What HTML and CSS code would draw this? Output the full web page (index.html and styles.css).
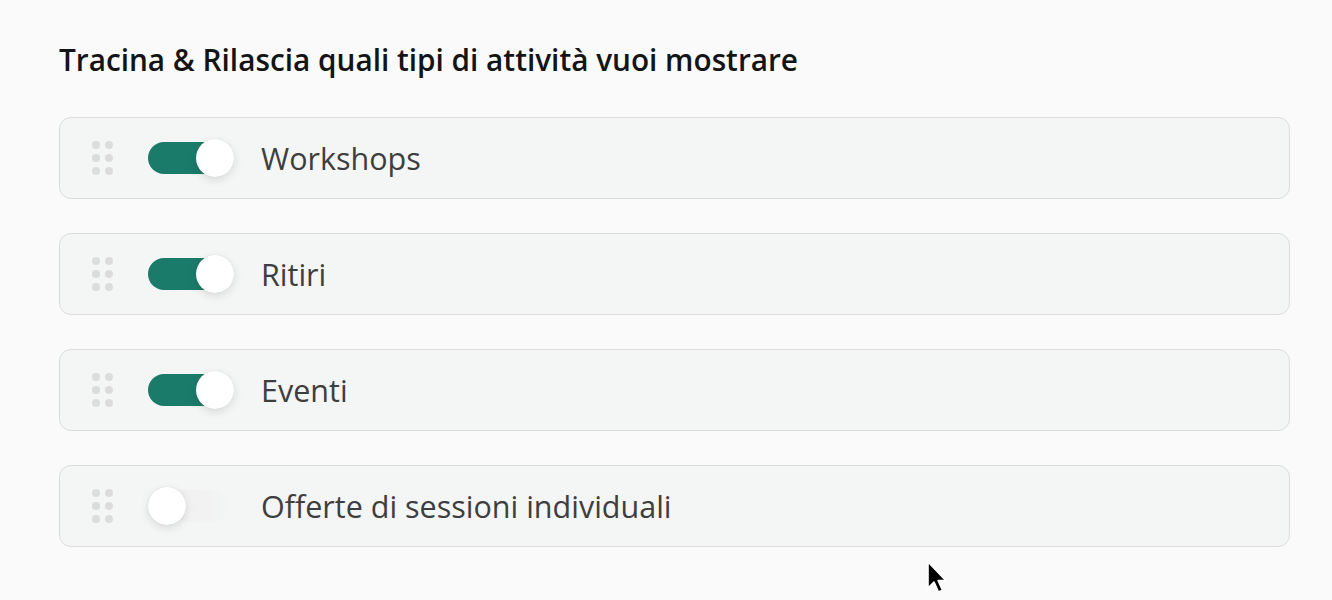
FILE: index.html
```html
<!DOCTYPE html>
<html lang="it">
<head>
<meta charset="utf-8">
<title>Tipi di attività</title>
<link rel="stylesheet" href="styles.css">
</head>
<body>
<main class="page">
  <h2 class="title">Tracina &amp; Rilascia quali tipi di attività vuoi mostrare</h2>
  <ul class="list">
    <li class="card">
      <span class="handle"><i></i><i></i><i></i><i></i><i></i><i></i></span>
      <span class="toggle on"><span class="knob"></span></span>
      <span class="label">Workshops</span>
    </li>
    <li class="card">
      <span class="handle"><i></i><i></i><i></i><i></i><i></i><i></i></span>
      <span class="toggle on"><span class="knob"></span></span>
      <span class="label">Ritiri</span>
    </li>
    <li class="card">
      <span class="handle"><i></i><i></i><i></i><i></i><i></i><i></i></span>
      <span class="toggle on"><span class="knob"></span></span>
      <span class="label">Eventi</span>
    </li>
    <li class="card">
      <span class="handle"><i></i><i></i><i></i><i></i><i></i><i></i></span>
      <span class="toggle off"><span class="knob"></span></span>
      <span class="label">Offerte di sessioni individuali</span>
    </li>
  </ul>
</main>
<svg class="cursor" width="24" height="36" viewBox="0 0 24 36" aria-hidden="true">
  <path d="M2 1 L2 27 L8 21 L12.5 31 L16.5 29.3 L12.2 19.6 L20 19.6 Z" fill="#000" stroke="#fff" stroke-width="1.6" stroke-linejoin="round"/>
</svg>
</body>
</html>
```
FILE: styles.css
```css
html, body {
  margin: 0;
  padding: 0;
  background: #fafafa;
}
body {
  font-family: "Open Sans", "Noto Sans", sans-serif;
  width: 1332px;
  height: 600px;
  overflow: hidden;
  position: relative;
}
.page {
  padding: 40px 42px 0 59px;
}
.title {
  margin: 0 0 37px 0;
  font-size: 29.75px;
  font-weight: 600;
  line-height: 40px;
  color: #141414;
  letter-spacing: 0;
}
.list {
  list-style: none;
  margin: 0;
  padding: 0;
  display: flex;
  flex-direction: column;
  gap: 34px;
}
.card {
  box-sizing: border-box;
  height: 82px;
  border: 1.5px solid #dbdcdc;
  border-radius: 12px;
  background: #f4f5f5;
  display: flex;
  align-items: center;
  padding-left: 32px;
}
.handle {
  display: grid;
  grid-template-columns: 8px 8px;
  grid-auto-rows: 8px;
  column-gap: 5px;
  row-gap: 5px;
  margin-right: 35px;
}
.handle i {
  display: block;
  width: 8px;
  height: 8px;
  border-radius: 50%;
  background: #dcdcdc;
}
.toggle {
  position: relative;
  width: 82px;
  height: 32px;
  border-radius: 16px;
  flex: none;
  margin-right: 31px;
}
.toggle.on {
  background: #1b7b6a;
}
.toggle.off {
  background: linear-gradient(90deg, #f0f0f0, #f2f2f2 70%, #f4f5f5);
}
.knob {
  position: absolute;
  top: -3px;
  width: 38px;
  height: 38px;
  border-radius: 50%;
  background: #fff;
  box-shadow: 0 3px 10px rgba(0,0,0,0.11), 0 0 1px rgba(0,0,0,0.15);
}
.toggle.on .knob { left: 48px; }
.toggle.off .knob { left: 0; }
.label {
  font-size: 30.5px;
  color: #3e3e3e;
  font-weight: 400;
}
.cursor {
  position: absolute;
  left: 926px;
  top: 561px;
}
```
